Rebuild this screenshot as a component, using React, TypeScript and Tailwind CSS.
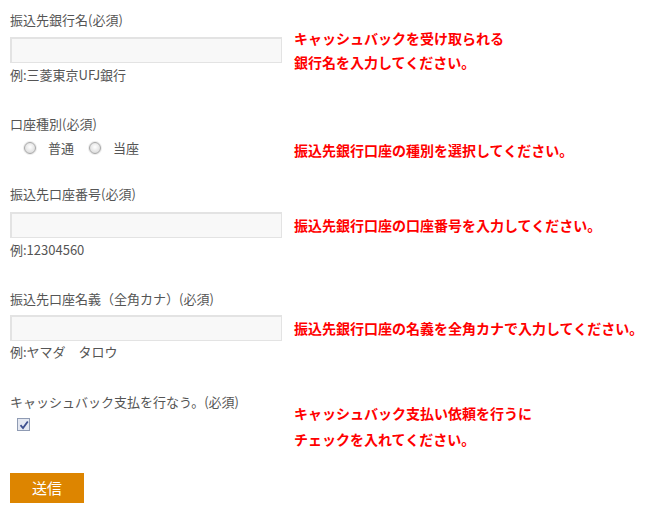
import type { ReactNode } from "react";

const FONT = { fontFamily: '"Noto Sans CJK JP", "Noto Sans", sans-serif' };

function Field() {
  return (
    <div className="h-[26px] w-[272px] border-t-2 border-l-2 border-r border-b border-[#e3e3e3] bg-[#f8f8f8]" />
  );
}

// red hint to the right of each field; h-0 so it never stretches the row
function Note({ children, className = "" }: { children: ReactNode; className?: string }) {
  return (
    <div className={`ml-3 h-0 whitespace-nowrap text-[14px] font-bold text-[#ff0000] ${className}`}>{children}</div>
  );
}

function Radio({ label }: { label: string }) {
  return (
    <span className="flex items-center">
      <span className="h-[12px] w-[12px] rounded-full border border-[#a8a8a8] bg-[radial-gradient(circle_at_50%_40%,#ffffff,#d2d2d2)] shadow-[0_0_0_1px_#ececec]" />
      <span className="ml-[12px]">{label}</span>
    </span>
  );
}

export default function App() {
  return (
    <div className="min-h-screen bg-white pl-[10px] text-[13px] leading-[20px] text-[#555]" style={FONT}>
      {/* bank name */}
      <div className="flex">
        <div className="w-[272px] pt-[10px]">
          <div>振込先銀行名(必須)</div>
          <div className="mt-[7px]"><Field /></div>
          <div className="mt-[2px]">例:三菱東京UFJ銀行</div>
        </div>
        <Note className="pt-[26px] leading-[24px]">
          キャッシュバックを受け取られる
          <br />
          銀行名を入力してください。
        </Note>
      </div>

      {/* account type */}
      <div className="mt-[29px] flex">
        <div className="w-[272px]">
          <div>口座種別(必須)</div>
          <div className="mt-[4px] flex gap-[15px] pl-[14px]">
            <Radio label="普通" />
            <Radio label="当座" />
          </div>
        </div>
        <Note className="pt-[24px] leading-[24px]">振込先銀行口座の種別を選択してください。</Note>
      </div>

      {/* account number */}
      <div className="mt-[26px] flex">
        <div className="w-[272px]">
          <div>振込先口座番号(必須)</div>
          <div className="mt-[8px]"><Field /></div>
          <div className="mt-[2px]">例:12304560</div>
        </div>
        <Note className="pt-[29px] leading-[24px]">振込先銀行口座の口座番号を入力してください。</Note>
      </div>

      {/* account holder */}
      <div className="mt-[29px] flex">
        <div className="w-[272px]">
          <div>振込先口座名義（全角カナ）(必須)</div>
          <div className="mt-[6px]"><Field /></div>
          <div className="mt-[1px]">例:ヤマダ　タロウ</div>
        </div>
        <Note className="pt-[27px] leading-[24px]">振込先銀行口座の名義を全角カナで入力してください。</Note>
      </div>

      {/* confirm */}
      <div className="mt-[30px] flex">
        <div className="w-[272px]">
          <div>キャッシュバック支払を行なう。(必須)</div>
          <div className="mt-[6px] pl-[7px]">
            <span className="flex h-[13px] w-[13px] items-center justify-center border border-[#8f9bb3] bg-[#e4e8f2]">
              <svg width="10" height="10" viewBox="0 0 10 10">
                <path d="M1.5 5.2 L4 8 L8.8 1.5" fill="none" stroke="#3d4f8f" strokeWidth="1.8" />
              </svg>
            </span>
          </div>
        </div>
        <Note className="pt-[8px] leading-[26px]">
          キャッシュバック支払い依頼を行うに
          <br />
          チェックを入れてください。
        </Note>
      </div>

      <button className="mt-[42px] h-[30px] w-[74px] bg-[#dd8500] text-[15px] leading-[30px] text-white">送信</button>
    </div>
  );
}
